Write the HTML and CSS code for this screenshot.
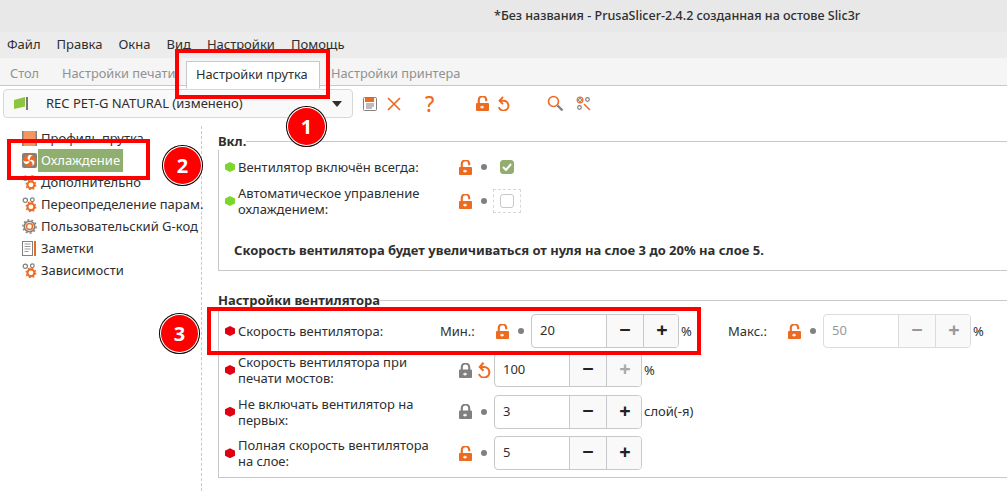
FILE: index.html
```html
<!DOCTYPE html>
<html lang="ru">
<head>
<meta charset="utf-8">
<title>PrusaSlicer</title>
<link rel="stylesheet" href="styles.css">
</head>
<body>
<svg class="defs" width="0" height="0">
  <symbol id="lock-open" viewBox="0 0 14 16"><path d="M3 8V4.500a4 4 0 0 1 8-.6V5.500" fill="none" stroke="currentColor" stroke-width="2.300"/><path d="M1 7.500h12a1 1 0 0 1 1 1V15a1 1 0 0 1-1 1H1a1 1 0 0 1-1-1V8.500a1 1 0 0 1 1-1z" fill="currentColor"/><path d="M4.500 11.800h4M6.500 10.300v3" stroke="#fff" stroke-width="1.400"/></symbol>
  <symbol id="lock-closed" viewBox="0 0 14 16"><path d="M3 8V4.500a4 4 0 0 1 8 0V8" fill="none" stroke="currentColor" stroke-width="2.300"/><path d="M1 7h12a1 1 0 0 1 1 1v7a1 1 0 0 1-1 1H1a1 1 0 0 1-1-1V8a1 1 0 0 1 1-1z" fill="currentColor"/><path d="M4.500 11.800h4M6.500 10.300v3" stroke="#fff" stroke-width="1.400"/></symbol>
  <symbol id="undo" viewBox="0 0 14 16"><path d="M3.500 5h3.500a5.300 5.300 0 1 1-5 7" fill="none" stroke="currentColor" stroke-width="2.100"/><path d="M6.500 0.800 2.800 5l3.700 3.700" fill="none" stroke="currentColor" stroke-width="2.100"/></symbol>
  <symbol id="gears" viewBox="0 0 16 16"><circle cx="3.500" cy="3.500" r="2.300" fill="none" stroke="#808080" stroke-width="1.300"/><circle cx="11" cy="3" r="2" fill="none" stroke="#808080" stroke-width="1.300"/><circle cx="9.500" cy="10.500" r="3.700" fill="none" stroke="#ed6b21" stroke-width="2.200"/><circle cx="9.500" cy="10.500" r="5.200" fill="none" stroke="#ed6b21" stroke-width="1.300" stroke-dasharray="1.800 2.300"/></symbol>
</svg>

<header class="titlebar">*Без названия - PrusaSlicer-2.4.2 созданная на остове Slic3r</header>

<nav class="menubar">
  <span class="menu-item">Файл</span>
  <span class="menu-item">Правка</span>
  <span class="menu-item">Окна</span>
  <span class="menu-item">Вид</span>
  <span class="menu-item">Настройки</span>
  <span class="menu-item">Помощь</span>
</nav>

<div class="tabs">
  <span class="tab tab-plate">Стол</span>
  <span class="tab tab-print">Настройки печати</span>
  <span class="tab tab-active">Настройки прутка</span>
  <span class="tab tab-printer">Настройки принтера</span>
</div>

<div class="toolbar">
  <div class="combo">
    <svg class="flag" width="15" height="13" viewBox="0 0 15 13"><path d="M0 3 11 0v9.500L0 12z" fill="#8cc63f"/><rect x="12" y="0" width="2" height="13" fill="#777"/></svg>
    <span class="combo-text">REC PET-G NATURAL (изменено)</span>
    <span class="combo-arrow"></span>
  </div>
  <svg class="tool tool-save" width="14" height="14" viewBox="0 0 14 14"><rect x=".5" y=".5" width="13" height="13" rx="1" fill="#fff" stroke="#808080"/><rect x="2" y="1" width="9" height="4" fill="#ed6b21"/><path d="M3 7h8M3 9h8M3 11h6" stroke="#a6a6a6" stroke-width="1.300"/></svg>
  <svg class="tool tool-x" width="14" height="14" viewBox="0 0 14 14"><path d="M1 1l12 12M13 1 1 13" stroke="#ed6b21" stroke-width="1.700"/></svg>
  <span class="tool tool-help">?</span>
  <svg class="tool tool-lock icon-orange" width="13" height="15"><use href="#lock-open"/></svg>
  <svg class="tool tool-undo icon-orange" width="13" height="15"><use href="#undo"/></svg>
  <svg class="tool tool-search" width="17" height="17" viewBox="0 0 17 17"><circle cx="6.500" cy="6.500" r="5" fill="none" stroke="#ed6b21" stroke-width="1.600"/><path d="M10.500 10.500l5 5" stroke="#808080" stroke-width="2.400"/></svg>
  <svg class="tool tool-filter" width="15" height="15" viewBox="0 0 15 15"><circle cx="4" cy="4" r="2.900" fill="none" stroke="#ed6b21" stroke-width="1.200"/><circle cx="4" cy="4" r="1.500" fill="none" stroke="#808080"/><circle cx="11.500" cy="3.500" r="1.800" fill="none" stroke="#808080" stroke-width="1.200"/><circle cx="3.500" cy="11.500" r="1.800" fill="none" stroke="#808080" stroke-width="1.200"/><path d="M8 8l6 6" stroke="#ed6b21" stroke-width="1.500"/></svg>
</div>

<div class="content">
  <aside class="sidebar">
    <div class="side-item">
      <svg class="side-icon" width="15" height="15" viewBox="0 0 15 15"><rect width="15" height="15" fill="#f4975f"/><rect width="1.500" height="15" fill="#808080"/><rect x="13.500" width="1.500" height="15" fill="#808080"/></svg>
      <span>Профиль прутка</span>
    </div>
    <div class="side-item side-selected">
      <svg class="side-icon" width="15" height="15" viewBox="0 0 15 15"><rect width="15" height="15" rx="2" fill="#808080"/><circle cx="7.500" cy="7.500" r="6.300" fill="#ed6b21"/><path d="M7.500 7.500C5.500 6.800 4.800 4 7 2.300c1.300-.6 2.800-.4 3.800.3C8.700 3 7.600 5 7.500 7.500zM7.500 7.500c1.600-1.400 4.400-.7 5 2-.1 1.400-1 2.600-2.100 3.200.8-2-.3-4-2.900-5.200zM7.500 7.500c.4 2.100-1.700 4.100-4.300 3.200C2 10 1.400 8.600 1.400 7.300 2.700 9 5 8.900 7.500 7.500z" fill="#fff"/></svg>
      <span class="side-label">Охлаждение</span>
    </div>
    <div class="side-item">
      <svg class="side-icon" width="15" height="15"><use href="#gears"/></svg>
      <span>Дополнительно</span>
    </div>
    <div class="side-item">
      <svg class="side-icon" width="15" height="15"><use href="#gears"/></svg>
      <span>Переопределение парам.</span>
    </div>
    <div class="side-item">
      <svg class="side-icon" width="15" height="15" viewBox="0 0 15 15"><circle cx="7.500" cy="7.500" r="5.200" fill="none" stroke="#808080" stroke-width="1.600"/><circle cx="7.500" cy="7.500" r="6.600" fill="none" stroke="#808080" stroke-width="1.400" stroke-dasharray="2 2.100"/><circle cx="7.500" cy="7.500" r="3" fill="none" stroke="#ed6b21" stroke-width="1.500"/></svg>
      <span>Пользовательский G-код</span>
    </div>
    <div class="side-item">
      <svg class="side-icon" width="15" height="15" viewBox="0 0 15 15"><rect x=".5" y=".5" width="10" height="14" fill="#fff" stroke="#808080"/><path d="M2.500 3h6M2.500 5.500h6M2.500 8h6M2.500 10.500h4" stroke="#999"/><rect x="12" width="2" height="15" fill="#ed6b21"/></svg>
      <span>Заметки</span>
    </div>
    <div class="side-item">
      <svg class="side-icon" width="15" height="15"><use href="#gears"/></svg>
      <span>Зависимости</span>
    </div>
  </aside>

  <main class="settings">
    <fieldset class="group group-on">
      <legend class="group-title">Вкл.</legend>
      <div class="row">
        <span class="mark mark-green"></span>
        <span class="label label-wide">Вентилятор включён всегда:</span>
        <span class="status"><svg class="lock icon-orange"><use href="#lock-open"/></svg><span class="dot"></span></span>
        <span class="check-wrap"><span class="check check-on">
          <svg width="10" height="8" viewBox="0 0 10 8"><path d="M1 4l3 3 5-6" fill="none" stroke="#fff" stroke-width="2"/></svg>
        </span></span>
      </div>
      <div class="row">
        <span class="mark mark-green"></span>
        <span class="label label-wide">Автоматическое управление охлаждением:</span>
        <span class="status"><svg class="lock icon-orange"><use href="#lock-open"/></svg><span class="dot"></span></span>
        <span class="check-wrap check-focus"><span class="check"></span></span>
      </div>
      <p class="note">Скорость вентилятора будет увеличиваться от нуля на слое 3 до 20% на слое 5.</p>
    </fieldset>

    <fieldset class="group group-fan">
      <legend class="group-title">Настройки вентилятора</legend>
      <div class="row row-first">
        <span class="mark mark-red"></span>
        <span class="label label-speed">Скорость вентилятора:</span>
        <span class="sublabel sublabel-min">Мин.:</span>
        <span class="status"><svg class="lock icon-orange"><use href="#lock-open"/></svg><span class="dot"></span></span>
        <span class="spin">
          <span class="spin-value">20</span>
          <span class="spin-btn">&minus;</span>
          <span class="spin-btn">+</span>
        </span>
        <span class="unit unit-first">%</span>
        <span class="sublabel sublabel-max">Макс.:</span>
        <span class="status"><svg class="lock icon-orange"><use href="#lock-open"/></svg><span class="dot"></span></span>
        <span class="spin spin-disabled">
          <span class="spin-value">50</span>
          <span class="spin-btn">&minus;</span>
          <span class="spin-btn">+</span>
        </span>
        <span class="unit">%</span>
      </div>
      <div class="row">
        <span class="mark mark-red"></span>
        <span class="label label-wide">Скорость вентилятора при печати мостов:</span>
        <span class="status"><svg class="lock icon-gray"><use href="#lock-closed"/></svg><svg class="undo icon-orange"><use href="#undo"/></svg></span>
        <span class="spin spin-max">
          <span class="spin-value">100</span>
          <span class="spin-btn">&minus;</span>
          <span class="spin-btn">+</span>
        </span>
        <span class="unit">%</span>
      </div>
      <div class="row">
        <span class="mark mark-red"></span>
        <span class="label label-wide">Не включать вентилятор на первых:</span>
        <span class="status"><svg class="lock icon-gray"><use href="#lock-closed"/></svg><span class="dot"></span></span>
        <span class="spin">
          <span class="spin-value">3</span>
          <span class="spin-btn">&minus;</span>
          <span class="spin-btn">+</span>
        </span>
        <span class="unit">слой(-я)</span>
      </div>
      <div class="row">
        <span class="mark mark-red"></span>
        <span class="label label-wide">Полная скорость вентилятора на слое:</span>
        <span class="status"><svg class="lock icon-orange"><use href="#lock-open"/></svg><span class="dot"></span></span>
        <span class="spin">
          <span class="spin-value">5</span>
          <span class="spin-btn">&minus;</span>
          <span class="spin-btn">+</span>
        </span>
      </div>
    </fieldset>
  </main>
</div>

<div class="callout-box box-1"></div>
<div class="callout-box box-2"></div>
<div class="callout-box box-3"></div>
<div class="badge badge-1">1</div>
<div class="badge badge-2">2</div>
<div class="badge badge-3">3</div>
</body>
</html>
```

FILE: styles.css
```css
* { box-sizing: border-box; }
html, body { margin: 0; padding: 0; }
body {
  position: relative;
  width: 1007px;
  height: 491px;
  overflow: hidden;
  background: #fff;
  color: #2f2f2f;
  font: 13px/15px "Noto Sans", sans-serif;
}
.defs { position: absolute; }

.titlebar {
  height: 32px;
  padding: 8px 0 0 494px;
  background: #e8e8e8;
  font-weight: 500;
  font-size: 12.55px;
  white-space: nowrap;
}
.menubar {
  display: flex;
  height: 26px;
  padding: 5px 0 0 7px;
  background: #ececec;
}
.menu-item { margin-right: 16px; }

.tabs {
  display: flex;
  height: 28px;
  background: #f5f5f5;
  border-bottom: 1px solid #c8c8c8;
  font-size: 12.8px;
}
.tab { padding-top: 8px; color: #919191; white-space: nowrap; }
.tab-plate { margin-left: 10px; width: 52px; }
.tab-print { width: 124px; }
.tab-active {
  width: 134px;
  height: 28px;
  margin-top: 3px;
  padding: 5px 0 0 9px;
  background: #fff;
  border: 1px solid #c8c8c8;
  border-bottom-color: #fff;
  color: #2f2f2f;
}
.tab-printer { margin-left: 11px; }

.toolbar {
  position: relative;
  display: flex;
  align-items: center;
  height: 40px;
  padding: 3px 0 8px 3px;
}
.combo {
  display: flex;
  align-items: center;
  width: 350px;
  height: 29px;
  padding-left: 10px;
  border: 1px solid #d8d8d8;
  border-radius: 4px;
  background: #f9f9f9;
}
.flag { flex: none; }
.combo-text { margin-left: 17px; flex: 1; white-space: nowrap; }
.combo-arrow {
  width: 0;
  height: 0;
  margin-right: 10px;
  border: 5px solid transparent;
  border-top: 6px solid #2f2f2f;
  border-bottom: 0;
}
.tool { flex: none; }
.tool-save { margin-left: 10px; }
.tool-x { margin-left: 10px; }
.tool-help {
  width: 14px;
  margin-left: 24px;
  color: #ed6b21;
  font-size: 21px;
  font-weight: 500;
  line-height: 20px;
}
.tool-lock { margin-left: 37px; }
.tool-undo { margin-left: 8px; }
.tool-search { margin-left: 37px; }
.tool-filter { margin-left: 12px; }
.icon-orange { color: #ed6b21; }
.icon-gray { color: #808080; }

.content { display: flex; height: 365px; }
.sidebar {
  flex: none;
  width: 202px;
  padding: 1px 0 0 22px;
  border-right: 1px dashed #c8c8c8;
}
.side-item {
  display: flex;
  align-items: center;
  height: 22px;
  white-space: nowrap;
}
.side-icon { flex: none; margin-right: 4px; }
.side-label {
  margin-left: -3px;
  padding: 4px 3px;
  background: #8fae6f;
  color: #fff;
}

.settings { flex: none; width: 805px; padding: 6px 0 0 16px; }
.group {
  margin: 0 -10px 20px 0;
  padding: 0 0 0 6px;
  border: 1px solid #c8c8c8;
  min-width: 0;
}
.group-title {
  margin-left: -7px;
  padding: 0;
  height: 18px;
  font-weight: 700;
  line-height: 18px;
}
.group-on { height: 139px; }
.group-fan { padding: 5px 0 7px 6px; }

.row {
  display: flex;
  align-items: center;
  height: 34px;
  margin-bottom: 7.67px;
  white-space: nowrap;
}
.group-on .row { margin-bottom: 0; }
.row-first { margin-bottom: 5px; }
.group-fan .row:last-child { margin-bottom: 0; }

.mark { flex: none; width: 10px; height: 10px; margin-right: 3px; }
.mark-green {
  background: #7dd62b;
  clip-path: polygon(50% 0, 100% 25%, 100% 75%, 50% 100%, 0 75%, 0 25%);
}
.mark-red {
  background: #e00012;
  clip-path: polygon(50% 0, 100% 25%, 100% 75%, 50% 100%, 0 75%, 0 25%);
}
.label { flex: none; white-space: normal; line-height: 16px; }
.label-wide { width: 221px; padding-right: 20px; }
.label-speed { width: 202px; }
.sublabel { flex: none; }
.sublabel-min { width: 56px; }
.sublabel-max { width: 60px; }

.status {
  flex: none;
  display: flex;
  align-items: center;
  width: 35px;
}
.lock { flex: none; width: 13px; height: 15px; }
.undo { flex: none; width: 14px; height: 16px; margin-left: 5px; }
.dot {
  width: 6px;
  height: 6px;
  margin-left: 9px;
  border-radius: 50%;
  background: #808080;
}

.check-wrap {
  display: flex;
  align-items: center;
  justify-content: center;
  width: 28px;
  height: 24px;
  margin-left: -1px;
}
.check-focus { border: 1px dashed #d8d8d8; }
.check {
  display: flex;
  align-items: center;
  justify-content: center;
  width: 14px;
  height: 14px;
  border: 1px solid #c8c8c8;
  border-radius: 3px;
  background: #fff;
}
.check-on { background: #92ad6f; border-color: #92ad6f; }

.note { margin: 22px 0 0 9px; font-weight: 700; line-height: 20px; white-space: nowrap; }

.spin {
  flex: none;
  display: flex;
  width: 148px;
  height: 34px;
  border: 1px solid #c8c8c8;
  border-radius: 4px;
  overflow: hidden;
  background: #fff;
}
.spin-value { flex: none; width: 74px; padding-left: 8px; line-height: 31px; }
.spin-btn {
  flex: none;
  width: 37px;
  border-left: 1px solid #c8c8c8;
  background: #f9f9f9;
  color: #222;
  text-align: center;
  font-size: 20px;
  font-weight: 700;
  line-height: 30px;
}
.spin-disabled { border-color: #dcdcdc; }
.spin-disabled .spin-value { color: #999; }
.spin-disabled .spin-btn { color: #999; border-color: #dcdcdc; }
.spin-max .spin-btn:last-child { color: #aaa; }
.unit { flex: none; margin-left: 2px; }
.unit-first { width: 47px; }

.callout-box { position: absolute; border: 4px solid #f00; }
.box-1 { left: 175px; top: 49px; width: 155px; height: 50px; }
.box-2 { left: 7px; top: 139px; width: 143px; height: 41px; }
.box-3 { left: 207px; top: 307px; width: 494px; height: 48px; }
.badge {
  position: absolute;
  width: 41px;
  height: 41px;
  border-radius: 50%;
  background: #f00;
  box-shadow: 0 0 0 1px #000 inset, 0 0 0 2px #fff inset;
  color: #fff;
  font: 700 20px/41px "Noto Sans", sans-serif;
  text-align: center;
}
.badge-1 { left: 286px; top: 106px; }
.badge-2 { left: 162px; top: 145px; }
.badge-3 { left: 159px; top: 313px; }
```
